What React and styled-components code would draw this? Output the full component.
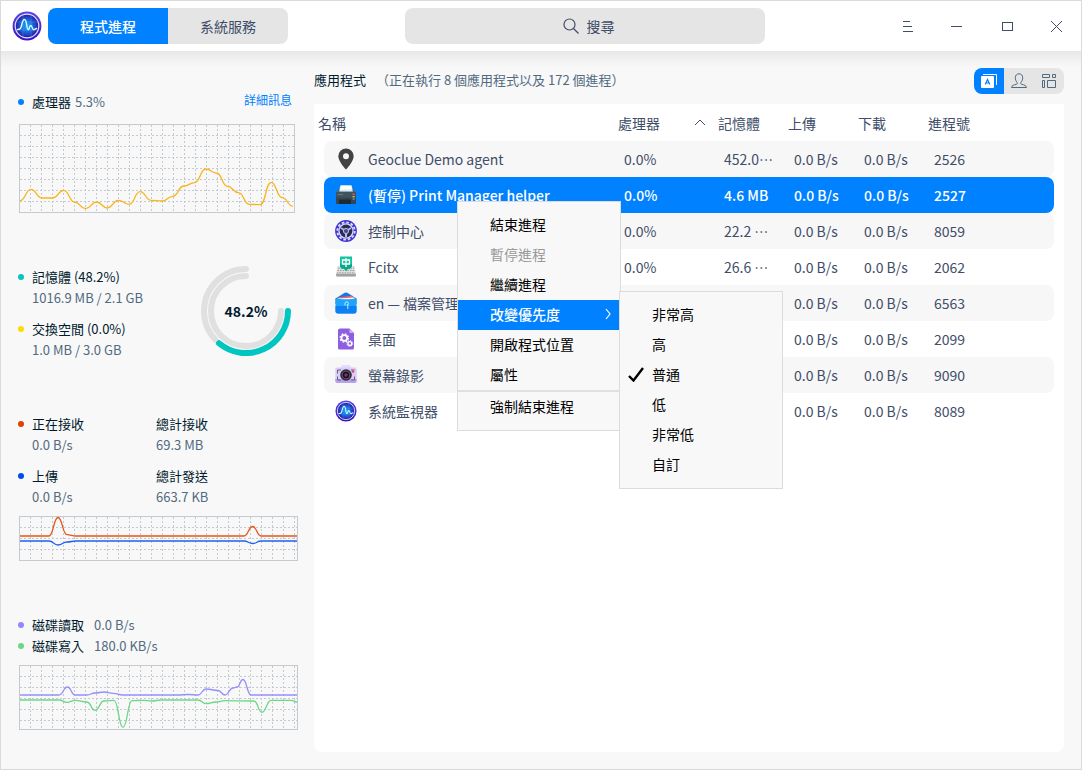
import React from "react";
import styled, { createGlobalStyle, css } from "styled-components";

const GlobalStyle = createGlobalStyle`
  *, *::before, *::after { box-sizing: border-box; }
  body {
    margin: 0;
    background: #f8f8f8;
    font-family: "Noto Sans CJK TC", "Noto Sans", sans-serif;
    font-size: 14px;
    color: #414d68;
  }
  button, input { font: inherit; color: inherit; }
  h2, p, dl, dd, dt { margin: 0; font-weight: 400; }
`;

/* ---------- window frame ---------- */

const Window = styled.div`
  display: flex;
  flex-direction: column;
  min-height: 100vh;
  border: 1px solid #dadada;
  background: #f8f8f8;
`;

const TitleBar = styled.header`
  display: flex;
  align-items: center;
  height: 50px;
  padding-left: 11px;
  background: #fff;
`;

const LogoBox = styled.div`
  display: flex;
  width: 36px;
`;

const Tabs = styled.nav`
  display: flex;
  height: 36px;
  border-radius: 8px;
  overflow: hidden;
`;

const Tab = styled.button`
  width: 120px;
  padding: 0;
  border: 0;
  background: ${(p) => (p.$active ? "#0081ff" : "#e5e5e5")};
  color: ${(p) => (p.$active ? "#fff" : "#414d68")};
  font-weight: ${(p) => (p.$active ? 500 : 400)};
`;

const SearchArea = styled.div`
  display: flex;
  flex: 1;
  justify-content: center;
`;

const SearchBox = styled.label`
  display: flex;
  align-items: center;
  justify-content: center;
  gap: 8px;
  width: 360px;
  height: 36px;
  padding-left: 10px;
  border-radius: 8px;
  background: #e5e5e5;
`;

const SearchInput = styled.input`
  width: 30px;
  padding: 0;
  border: 0;
  outline: 0;
  background: transparent;
  &::placeholder { color: #414d68; opacity: 1; }
  &:focus { width: 240px; }
`;

const WindowButton = styled.button`
  display: grid;
  place-items: center;
  width: 50px;
  height: 50px;
  padding: 0 0 0 2px;
  border: 0;
  background: transparent;
`;

const Body = styled.div`
  display: flex;
  flex: 1;
  background: linear-gradient(#e8e8e8, #f8f8f8 16px);
`;

/* ---------- sidebar ---------- */

const Sidebar = styled.aside`
  display: flex;
  flex-direction: column;
  gap: 53px;
  width: 313px;
  flex-shrink: 0;
  padding: 40px 16px 0 17px;
`;

const Section = styled.section`
  display: flex;
  flex-direction: column;
  font-size: 13px;
  line-height: 21px;
`;

const Row = styled.div`
  display: flex;
  justify-content: ${(p) => (p.$spread ? "space-between" : "flex-start")};
  gap: ${(p) => p.$gap || 0}px;
`;

const Label = styled.span`
  display: flex;
  align-items: center;
  gap: 8px;
  color: #001a2e;
  &::before {
    content: "";
    width: 6px;
    height: 6px;
    border-radius: 50%;
    background: ${(p) => p.$dot};
  }
`;

const Value = styled.span`
  color: #526a7f;
`;

const DetailLink = styled.a`
  margin-right: 6px;
  color: #0081ff;
  font-size: 12px;
  line-height: 18px;
  text-decoration: none;
`;

const ChartBox = styled.div`
  display: flex;
  margin: ${(p) => p.$top}px 0 0 1px;
`;

const MemoryRow = styled.div`
  display: flex;
  justify-content: space-between;
  padding-right: 7px;
`;

const Stats = styled.dl`
  display: grid;
  grid-template-columns: ${(p) => (p.$two ? "138px 1fr" : "1fr")};
  row-gap: 10px;
`;

const Stat = styled.div`
  dt { color: #001a2e; }
  dd { padding-left: ${(p) => (p.$plain ? 0 : 14)}px; color: #526a7f; }
`;

function smooth(points) {
  return points
    .map(([x, y], i) => {
      if (i === 0) return `M${x} ${y}`;
      const [px, py] = points[i - 1];
      const mid = (px + x) / 2;
      return `C${mid} ${py} ${mid} ${y} ${x} ${y}`;
    })
    .join("");
}

function Chart({ width, height, lines, label }) {
  const cols = [];
  for (let x = 11.5; x < width - 1; x += 11) cols.push(x);
  const rows = [];
  for (let y = 11.5; y < height - 1; y += 11) rows.push(y);
  return (
    <svg width={width} height={height} role="img" aria-label={label}>
      <g stroke="#c3cad0" strokeDasharray="2 2">
        {cols.map((x) => <line key={`c${x}`} x1={x} x2={x} y1="1" y2={height - 1} />)}
        {rows.map((y) => <line key={`r${y}`} x1="1" x2={width - 1} y1={y} y2={y} />)}
      </g>
      <rect x=".5" y=".5" width={width - 1} height={height - 1} fill="none" stroke="#c3cad0" />
      {lines.map(({ color, points }) => (
        <path key={color} d={smooth(points)} fill="none" stroke={color} strokeWidth="1.3" />
      ))}
    </svg>
  );
}

const cpuPoints = [
  76.7, 65.3, 74, 74, 66.3, 78, 84.7, 78, 84, 76.3, 80.3, 67.7, 76.3, 77, 72.3,
  62, 58.7, 45, 49, 62.3, 68.7, 80.3, 80.7, 58.3, 73.7, 82.3,
].map((y, i) => [1 + i * 10.92, y]);

const receivePoints = [[1, 20], [30, 20], [39, 1.5], [48, 18.7], [57, 20], [225, 20], [233.7, 10.5], [242, 20], [278, 20]];
const sendPoints = [[1, 25], [30, 25], [39, 29], [48, 26], [57, 25], [225, 25], [233.7, 27.5], [242, 25], [278, 25]];
const readPoints = [
  [1, 30], [40, 30], [48.5, 22], [56, 30], [68, 30], [76, 28], [85, 27], [94, 28.3], [104, 30],
  [159, 30], [169, 29.5], [179, 30], [187, 24], [199, 25.5], [206, 30], [214, 23], [218, 22], [224, 14.5], [232, 30], [278, 30],
];
const writePoints = [
  [1, 35], [40, 35], [48, 37.3], [56, 35.3], [68, 37], [76, 45.3], [85, 36], [95, 35.3], [104, 62.3],
  [113, 35.7], [124, 35.3], [133, 36], [142, 35], [179, 35], [187, 38.7], [197, 37], [206, 35.7], [232, 36],
  [235, 36], [243, 47.3], [252, 35.3], [272, 35.3], [278, 37],
];

function Gauge() {
  return (
    <svg width="90" height="90" viewBox="-45 -45 90 90" role="img" aria-label="48.2%">
      <g fill="none" strokeWidth="6" strokeLinecap="round">
        <path d="M42 0A42 42 0 1 1 0 -42" stroke="#e0e0e0" />
        <path d="M35 0A35 35 0 1 1 0 -35" stroke="#e0e0e0" />
        <path d="M42 0A42 42 0 0 1 -27 32.2" stroke="#f8f8f8" strokeWidth="7" />
        <path d="M42 0A42 42 0 0 1 -27 32.2" stroke="#00c5c0" />
      </g>
      <text x="0" y="6" textAnchor="middle" fontSize="14" fontWeight="700" fill="#001a2e">48.2%</text>
    </svg>
  );
}

/* ---------- main panel ---------- */

const Main = styled.main`
  display: flex;
  flex-direction: column;
  flex: 1;
  min-width: 0;
  padding: 17px 17px 17px 0;
`;

const MainHead = styled.div`
  display: flex;
  align-items: center;
  gap: 10px;
  height: 26px;
  margin-bottom: 10px;
  font-size: 13px;
  line-height: 24px;
  color: #526a7f;
`;

const Heading = styled.h2`
  padding-bottom: 2px;
  font-size: 13px;
  color: #001a2e;
`;

const Summary = styled.p`
  padding-bottom: 2px;
`;

const ViewSwitch = styled.div`
  display: flex;
  height: 26px;
  margin-left: auto;
  border-radius: 8px;
  overflow: hidden;
`;

const ViewButton = styled.button`
  display: grid;
  place-items: center;
  width: 30px;
  padding: 0;
  border: 0;
  background: ${(p) => (p.$active ? "#0081ff" : "#e5e5e5")};
  color: ${(p) => (p.$active ? "#fff" : "#526a7f")};
`;

const Card = styled.div`
  position: relative;
  flex: 1;
  border-radius: 0 0 8px 8px;
  background: #fff;
`;

const Table = styled.table`
  display: block;
  thead, tbody { display: block; }
`;

const columns = css`
  display: grid;
  grid-template-columns: minmax(0, 1fr) 100px 70px 70px 70px 120px;
  align-items: center;
`;

const HeadRow = styled.tr`
  ${columns}
  height: 37px;
  margin: 0 16px 0 4px;
`;

const HeadCell = styled.th`
  display: flex;
  align-items: center;
  justify-content: space-between;
  padding: 0 12px 0 0;
  font-weight: 400;
  text-align: left;
  white-space: nowrap;
`;

const ProcessRow = styled.tr`
  ${columns}
  height: 36px;
  margin: 0 10px;
  border-radius: 8px;
  background: ${(p) => (p.$selected ? "#0081ff" : p.$odd ? "#f7f7f7" : "#fff")};
  color: ${(p) => (p.$selected ? "#fff" : "inherit")};
  font-weight: ${(p) => (p.$selected ? 500 : 400)};
`;

const Cell = styled.td`
  display: flex;
  align-items: center;
  gap: 11px;
  padding: 0 0 0 ${(p) => (p.$name ? 11 : 0)}px;
  white-space: nowrap;
`;

/* ---------- menus ---------- */

const Menu = styled.div`
  position: absolute;
  left: ${(p) => (p.$sub ? "calc(100% - 1px)" : "143px")};
  top: ${(p) => (p.$sub ? "-9px" : "97px")};
  z-index: 1;
  width: 164px;
  padding: 8px 0;
  border: 1px solid #dcdcdc;
  background: #f8f8f8;
`;

const MenuEntry = styled.div`
  position: relative;
`;

const MenuItem = styled.button`
  display: flex;
  align-items: center;
  width: 100%;
  height: 30px;
  padding: 0 9px 2px 0;
  border: 0;
  text-align: left;
  font-weight: ${(p) => (p.$active ? 500 : 400)};
  background: ${(p) => (p.$active ? "#0081ff" : "transparent")};
  color: ${(p) => (p.$active ? "#fff" : "#000")};
  &:disabled { color: #999; }
`;

const MenuMark = styled.span`
  display: flex;
  justify-content: center;
  width: 32px;
`;

const MenuText = styled.span`
  flex: 1;
`;

const Separator = styled.div`
  height: 2px;
  background: #e0e0e0;
`;

/* ---------- icons ---------- */

function MonitorIcon({ size = 22 }) {
  return (
    <svg width={size} height={size} viewBox="0 0 30 30" aria-hidden="true">
      <defs>
        <radialGradient id="monitorFill">
          <stop offset="0" stopColor="#12b4f5" />
          <stop offset=".55" stopColor="#1b62d8" />
          <stop offset="1" stopColor="#281a9c" />
        </radialGradient>
        <linearGradient id="monitorRing" x1="0" y1="0" x2="0" y2="1">
          <stop offset="0" stopColor="#5b45e8" />
          <stop offset="1" stopColor="#3a0fc4" />
        </linearGradient>
      </defs>
      <circle cx="15" cy="15" r="14.4" fill="url(#monitorRing)" />
      <circle cx="15" cy="15" r="11.8" fill="url(#monitorFill)" stroke="#e4ddff" strokeWidth="1.2" />
      <path d="M4 11h22M4 19h22M11 4v22M19 4v22" stroke="#6fa8ff" strokeOpacity=".45" strokeWidth=".7" />
      <path d="M5.5 18.500c3 0 3.400-1 4.300-5 .8-3.500 1.500-5 2.700-5s1.700 2 2.200 5.500c.4 3 .8 4.800 1.600 4.800 1 0 1-4.300 2.500-4.300s1.400 4.300 2.900 4.300c1.100 0 1.300-1.300 2.800-1.300" fill="none" stroke="#d8fbff" strokeWidth="1.400" strokeLinecap="round" />
    </svg>
  );
}

const iconArt = {
  pin: (
    <path fill="#434343" fillRule="evenodd" d="M11 .5a7.700 7.700 0 0 0-7.700 7.700C3.300 13.500 11 21.500 11 21.500s7.700-8 7.700-13.300A7.700 7.700 0 0 0 11 .5Zm0 4.700a3 3 0 1 1 0 6 3 3 0 0 1 0-6Z" />
  ),
  printer: (
    <>
      <path d="M3 5h16l2 5H1Z" fill="#53646f" />
      <path d="M5.200 1.500h11.600l1 6H4.200Z" fill="#d3edf8" />
      <path d="M6 1.500h10l.6 4H5.400Z" fill="#fff" />
      <path d="M1 8.500h20V19a1 1 0 0 1-1 1H2a1 1 0 0 1-1-1Z" fill="#34464f" />
      <path d="M1 8.500h20v5H1Z" fill="#41545e" />
      <path d="M3 10.500h5" stroke="#718590" strokeWidth=".8" />
      <path d="M4 15.500h12V20H4Z" fill="#1d2a31" />
      <path d="M17.500 10.200h2.200" stroke="#ff6154" strokeWidth="1.200" />
      <path d="M17.500 12.700h2.200" stroke="#ffc83d" strokeWidth="1.200" />
      <path d="M17.500 15h2.200" stroke="#41b9f0" strokeWidth="1.200" />
    </>
  ),
  control: (
    <>
      <circle cx="11" cy="11" r="10.900" fill="#3f33d4" />
      <circle cx="11" cy="11" r="8.700" fill="none" stroke="#e3e0ff" strokeWidth="1.800" strokeDasharray="2.600 1.955" />
      <circle cx="11" cy="11" r="7.700" fill="#dcdcf7" />
      <circle cx="11" cy="11" r="6.400" fill="#2b2c56" />
      <path d="M11 11v6M11 11 6 8M11 11l5-3" stroke="#b3b7e2" strokeWidth="2" />
      <circle cx="11" cy="11" r="2.600" fill="#4b4d82" stroke="#bfc2ee" />
    </>
  ),
  fcitx: (
    <>
      <path d="M2.500 10h17L21 19a1.500 1.500 0 0 1-1.500 1.500h-17A1.500 1.500 0 0 1 1 19Z" fill="#dedede" />
      <path d="M1 17.800h20V19a1.500 1.500 0 0 1-1.500 1.500h-17A1.500 1.500 0 0 1 1 19Z" fill="#a2a2a2" />
      <path d="M3 12.200h16M2.500 14.500h17M2 16.800h18" stroke="#8f8f8f" strokeWidth=".8" strokeDasharray="1.500 1" />
      <path d="M5 .5h12v10l-2 2.300h-2L11 15l-2-2.200H7l-2-2.300Z" fill="#12c4a0" />
      <path d="M5 8h12v2.500l-2 2.300h-2L11 15l-2-2.200H7l-2-2.300Z" fill="#08a98b" />
      <path d="M7.500 4h7v4h-7ZM11 2v9" fill="none" stroke="#fff" strokeWidth="1.300" />
    </>
  ),
  files: (
    <>
      <path d="M.5 6.500 9.700.8a3 3 0 0 1 2.600 0l9.200 5.700V12H.5Z" fill="#1479e4" />
      <path d="m3 5.500 14.500-1.700 1.500 3H3Z" fill="#ff5d70" />
      <path d="m2.500 6.500 17-1v3h-17Z" fill="#f5f8ff" />
      <path d="M.5 6.500c4 1 17 1 21 0v12.500a2.500 2.500 0 0 1-2.500 2.500H3A2.500 2.500 0 0 1 .5 19Z" fill="#1da5fc" />
      <path d="M.5 14h21v5a2.500 2.500 0 0 1-2.500 2.500H3A2.500 2.500 0 0 1 .5 19Z" fill="#0c80f2" />
      <path d="M10 13.500v-2a1.700 1.700 0 1 1 1.700 1.700M12.800 12.500v4.500" fill="none" stroke="#b9f3ff" strokeWidth="1" />
    </>
  ),
  desktop: (
    <>
      <path d="M5 .5h9.500L19 5v15a1.500 1.500 0 0 1-1.500 1.500h-13A1.500 1.500 0 0 1 3 20V2.500a2 2 0 0 1 2-2Z" fill="#8d5fe0" />
      <path d="M14.500.5 19 5h-4.500Z" fill="#c9aef7" />
      <circle cx="9.300" cy="10" r="2.900" fill="none" stroke="#fff" strokeWidth="1.800" />
      <circle cx="9.300" cy="10" r="4.200" fill="none" stroke="#fff" strokeWidth="1.200" strokeDasharray="1.700 1.600" />
      <circle cx="14.800" cy="15.500" r="1.900" fill="none" stroke="#fff" strokeWidth="1.400" />
      <circle cx="14.800" cy="15.500" r="2.900" fill="none" stroke="#fff" strokeWidth=".9" strokeDasharray="1.200 1.070" />
    </>
  ),
  recorder: (
    <>
      <path d="M7 1h8l1.500 3.500h-11Z" fill="#e7ddfa" />
      <rect x=".3" y="3.500" width="21.400" height="15.500" rx="2" fill="#d9ccf6" />
      <path d="M.3 15h21.400v2a2 2 0 0 1-2 2H2.300a2 2 0 0 1-2-2Z" fill="#b7a3ea" />
      <path d="M6 6H2.500v3.500M16 6h3.500M19.500 12.500V16H16M2.500 12.500V16H6" fill="none" stroke="#6a5f85" />
      <circle cx="11" cy="11" r="5.800" fill="#2e2b3b" />
      <circle cx="11" cy="11" r="3.900" fill="#12101a" stroke="#665473" />
      <circle cx="11" cy="11" r="1.800" fill="#8e2670" />
      <circle cx="18" cy="7.500" r="1.200" fill="#fa3d52" />
    </>
  ),
};

function AppIcon({ name }) {
  if (name === "monitor") return <MonitorIcon />;
  return <svg width="22" height="22" viewBox="0 0 22 22" aria-hidden="true">{iconArt[name]}</svg>;
}

const Glyph = ({ size = 16, children }) => (
  <svg width={size} height={size} viewBox={`0 0 ${size} ${size}`} fill="none" stroke="currentColor" aria-hidden="true">
    {children}
  </svg>
);

/* ---------- data ---------- */

const processes = [
  { icon: "pin", name: "Geoclue Demo agent", cpu: "0.0%", memory: "452.0…", pid: 2526 },
  { icon: "printer", name: "(暫停) Print Manager helper", cpu: "0.0%", memory: "4.6 MB", pid: 2527, selected: true },
  { icon: "control", name: "控制中心", cpu: "0.0%", memory: "22.2 …", pid: 8059 },
  { icon: "fcitx", name: "Fcitx", cpu: "0.0%", memory: "26.6 …", pid: 2062 },
  { icon: "files", name: "en — 檔案管理", pid: 6563 },
  { icon: "desktop", name: "桌面", pid: 2099 },
  { icon: "recorder", name: "螢幕錄影", pid: 9090 },
  { icon: "monitor", name: "系統監視器", pid: 8089 },
];

const priorities = ["非常高", "高", "普通", "低", "非常低", "自訂"];

function Entry({ children, ...rest }) {
  return (
    <MenuItem role="menuitem" {...rest}>
      <MenuMark />
      <MenuText>{children}</MenuText>
    </MenuItem>
  );
}

function ProcessMenu() {
  return (
    <Menu role="menu">
      <Entry>結束進程</Entry>
      <Entry disabled>暫停進程</Entry>
      <Entry>繼續進程</Entry>
      <MenuEntry>
        <MenuItem $active role="menuitem" aria-haspopup="menu" aria-expanded="true">
          <MenuMark />
          <MenuText>改變優先度</MenuText>
          <svg width="6" height="12" fill="none" stroke="currentColor" strokeWidth="1.200" aria-hidden="true">
            <path d="m1 1 4 5-4 5" />
          </svg>
        </MenuItem>
        <Menu $sub role="menu">
          {priorities.map((text) => (
            <MenuItem key={text} role="menuitemradio" aria-checked={text === "普通"}>
              <MenuMark>
                {text === "普通" && (
                  <svg width="16" height="16" fill="none" stroke="#000" strokeWidth="2.400" aria-hidden="true">
                    <path d="m1 10 4.500 4.500L15 2" />
                  </svg>
                )}
              </MenuMark>
              <MenuText>{text}</MenuText>
            </MenuItem>
          ))}
        </Menu>
      </MenuEntry>
      <Entry>開啟程式位置</Entry>
      <Entry>屬性</Entry>
      <Separator role="separator" />
      <Entry>強制結束進程</Entry>
    </Menu>
  );
}

export default function App() {
  return (
    <Window>
      <GlobalStyle />
      <TitleBar>
        <LogoBox><MonitorIcon size={30} /></LogoBox>
        <Tabs>
          <Tab $active>程式進程</Tab>
          <Tab>系統服務</Tab>
        </Tabs>
        <SearchArea>
          <SearchBox>
            <Glyph>
              <circle cx="6.500" cy="6.500" r="5.500" strokeWidth="1.200" />
              <path d="m10.500 10.500 5 5" strokeWidth="1.200" />
            </Glyph>
            <SearchInput type="text" placeholder="搜尋" aria-label="搜尋" />
          </SearchBox>
        </SearchArea>
        <WindowButton aria-label="選單"><Glyph size={12}><path d="M2 1.500h7M2 6.500h9M2 11.500h10" /></Glyph></WindowButton>
        <WindowButton aria-label="最小化"><Glyph size={12}><path d="M0 6.500h11" /></Glyph></WindowButton>
        <WindowButton aria-label="最大化"><Glyph size={12}><rect x="1.500" y="2.500" width="10" height="8" /></Glyph></WindowButton>
        <WindowButton aria-label="關閉"><Glyph size={12}><path d="m0 1 11 11M11 1 0 12" /></Glyph></WindowButton>
      </TitleBar>

      <Body>
        <Sidebar>
          <Section>
            <Row $spread>
              <Row $gap={4}>
                <Label $dot="#0081ff">處理器</Label>
                <Value>5.3%</Value>
              </Row>
              <DetailLink href="#cpu">詳細訊息</DetailLink>
            </Row>
            <ChartBox $top={12}>
              <Chart width={276} height={89} label="處理器" lines={[{ color: "#f8b51c", points: cpuPoints }]} />
            </ChartBox>
          </Section>

          <Section>
            <MemoryRow>
              <Stats>
                <Stat>
                  <dt><Label $dot="#00c5c0">記憶體 (48.2%)</Label></dt>
                  <dd>1016.9 MB / 2.1 GB</dd>
                </Stat>
                <Stat>
                  <dt><Label $dot="#ffdc00">交換空間 (0.0%)</Label></dt>
                  <dd>1.0 MB / 3.0 GB</dd>
                </Stat>
              </Stats>
              <Gauge />
            </MemoryRow>
          </Section>

          <Section>
            <Stats $two>
              <Stat>
                <dt><Label $dot="#e14300">正在接收</Label></dt>
                <dd>0.0 B/s</dd>
              </Stat>
              <Stat $plain>
                <dt>總計接收</dt>
                <dd>69.3 MB</dd>
              </Stat>
              <Stat>
                <dt><Label $dot="#004bf0">上傳</Label></dt>
                <dd>0.0 B/s</dd>
              </Stat>
              <Stat $plain>
                <dt>總計發送</dt>
                <dd>663.7 KB</dd>
              </Stat>
            </Stats>
            <ChartBox $top={9}>
              <Chart
                width={279}
                height={45}
                label="網路"
                lines={[{ color: "#e6541a", points: receivePoints }, { color: "#1f62f2", points: sendPoints }]}
              />
            </ChartBox>
          </Section>

          <Section>
            <Row $gap={10}>
              <Label $dot="#8f88ff">磁碟讀取</Label>
              <Value>0.0 B/s</Value>
            </Row>
            <Row $gap={10}>
              <Label $dot="#6bd787">磁碟寫入</Label>
              <Value>180.0 KB/s</Value>
            </Row>
            <ChartBox $top={9}>
              <Chart
                width={279}
                height={65}
                label="磁碟"
                lines={[{ color: "#958ffb", points: readPoints }, { color: "#6bd787", points: writePoints }]}
              />
            </ChartBox>
          </Section>
        </Sidebar>

        <Main>
          <MainHead>
            <Heading>應用程式</Heading>
            <Summary>（正在執行 8 個應用程式以及 172 個進程）</Summary>
            <ViewSwitch>
              <ViewButton $active aria-label="應用程式">
                <svg width="18" height="16" viewBox="0 0 18 16" aria-hidden="true">
                  <path d="M3 1.500h13.500V12" fill="none" stroke="#fff" />
                  <rect x="1" y="3" width="13" height="12" rx="1" fill="#fff" />
                  <path d="m5.200 11.500 2.300-5 2.300 5M6.200 10h2.600" fill="none" stroke="#0081ff" strokeWidth="1.200" />
                </svg>
              </ViewButton>
              <ViewButton aria-label="我的進程">
                <Glyph>
                  <path d="M.5 14.500h15c-.2-2-2.200-2.600-5-3.200-1-.3-1-1.300-.4-2.100.9-1.200 1.600-2.500 1.600-4.500C11.700 2.300 10.200.8 8 .8S4.300 2.300 4.300 4.700c0 2 .7 3.300 1.600 4.500.6.800.6 1.800-.4 2.100-2.800.6-4.800 1.200-5 3.200Z" />
                </Glyph>
              </ViewButton>
              <ViewButton aria-label="所有進程">
                <Glyph>
                  <path d="M1.500 1.500h7v3h-7ZM11.500 1.500h3v3h-3ZM1.500 7.500h2v7h-2ZM6.500 7.500h8v7h-8Z" />
                </Glyph>
              </ViewButton>
            </ViewSwitch>
          </MainHead>

          <Card>
            <Table>
              <thead>
                <HeadRow>
                  <HeadCell>名稱</HeadCell>
                  <HeadCell>
                    處理器
                    <svg width="12" height="8" fill="none" stroke="currentColor" aria-hidden="true">
                      <path d="m1 6 5-5 5 5" />
                    </svg>
                  </HeadCell>
                  <HeadCell>記憶體</HeadCell>
                  <HeadCell>上傳</HeadCell>
                  <HeadCell>下載</HeadCell>
                  <HeadCell>進程號</HeadCell>
                </HeadRow>
              </thead>
              <tbody>
                {processes.map((p, i) => (
                  <ProcessRow key={p.pid} $selected={p.selected} $odd={i % 2 === 0}>
                    <Cell $name><AppIcon name={p.icon} />{p.name}</Cell>
                    <Cell>{p.cpu}</Cell>
                    <Cell>{p.memory}</Cell>
                    <Cell>0.0 B/s</Cell>
                    <Cell>0.0 B/s</Cell>
                    <Cell>{p.pid}</Cell>
                  </ProcessRow>
                ))}
              </tbody>
            </Table>
            <ProcessMenu />
          </Card>
        </Main>
      </Body>
    </Window>
  );
}
